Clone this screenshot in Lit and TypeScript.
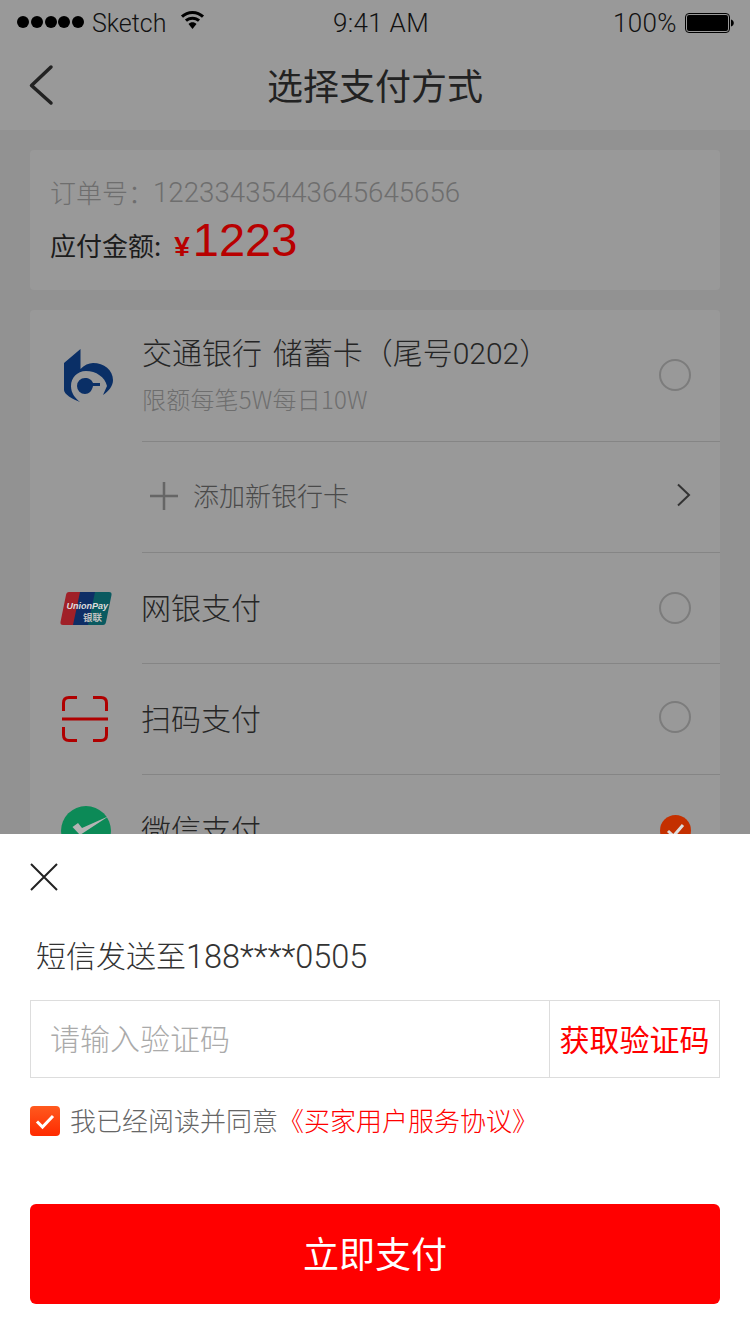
import { LitElement, html, css, svg } from "lit";
import { customElement } from "lit/decorators.js";

@customElement("app-root")
export class AppRoot extends LitElement {
  static styles = css`
    :host {
      display: block;
      position: relative;
      width: 750px;
      height: 1334px;
      overflow: hidden;
      background: #929292;
      font-family: "Noto Sans CJK SC", "Liberation Sans", sans-serif;
      font-weight: 300;
      color: #222;
    }
    .status {
      height: 40px;
      background: #999;
      display: grid;
      grid-template-columns: 1fr auto 1fr;
      align-items: center;
      padding: 6px 16px 0 17px;
      box-sizing: border-box;
      font-family: "Roboto", "Liberation Sans", sans-serif;
      font-weight: 300;
      font-size: 25px;
      color: #111;
    }
    .st-left, .st-right { display: flex; align-items: center; }
    .st-right { justify-content: flex-end; }
    .st-right span { font-size: 26px; letter-spacing: 0.4px; }
    .time { margin-left: 11px; font-size: 26px; letter-spacing: 0.3px; }
    .dots { display: flex; gap: 1.75px; margin-right: 8px; margin-top: -3px; }
    .dots i { width: 12px; height: 12px; border-radius: 50%; background: #000; display: block; }
    .wifi { margin-left: 14px; margin-top: -7px; }
    .battery { margin-left: 8px; margin-top: -1px; }
    .nav {
      height: 90px;
      background: #999;
      display: flex;
      align-items: center;
      justify-content: center;
      position: relative;
      font-size: 36px;
      font-weight: 400;
      color: #222;
      padding-bottom: 2px;
      box-sizing: border-box;
    }
    .back { position: absolute; left: 28px; top: 24px; }
    .main { padding: 20px 30px 0; display: flex; flex-direction: column; gap: 20px; }
    .order {
      height: 140px;
      background: #999;
      border-radius: 4px;
      padding: 21px 20px 0;
      box-sizing: border-box;
    }
    .order-no { display: flex; align-items: center; height: 40px; color: #6e6e6e; font-size: 26px; }
    .order-no b { font-weight: 300; font-family: "Roboto", "Liberation Sans", sans-serif; font-size: 27.7px; margin: 2px 0 0 -1px; }
    .due { display: flex; align-items: baseline; height: 58px; font-size: 26px; font-weight: 400; color: #1c1c1c; line-height: 58px; }
    .yen { color: #b80000; font-family: "Liberation Sans", sans-serif; font-weight: 700; font-size: 28px; margin-left: 13px; margin-right: 3px; }
    .amt { color: #b80000; font-family: "Liberation Sans", sans-serif; font-size: 47px; font-weight: 400; }
    .list { background: #999; border-radius: 4px; }
    .row { display: flex; height: 111px; }
    .row.first { height: 132px; }
    .slot { width: 112px; flex: none; display: flex; align-items: center; justify-content: center; }
    .body {
      flex: 1;
      display: flex;
      align-items: center;
      justify-content: space-between;
      border-bottom: 1px solid #858585;
      padding-right: 29px;
      font-size: 30px;
      color: #252525;
      box-sizing: border-box;
      min-width: 0;
    }
    .label { margin-left: -1px; margin-bottom: 4px; }
    .bank { padding-bottom: 5px; }
    .bank-title { font-size: 30px; line-height: 40px; color: #252525; word-spacing: 4px; }
    .bank-title span { font-family: "Roboto", "Liberation Sans", sans-serif; }
    .bank-sub { font-size: 24px; line-height: 34px; color: #6e6e6e; margin-top: 8px; letter-spacing: 0.2px; }
    .radio { width: 32px; height: 32px; box-sizing: border-box; border: 2px solid #7c7c7c; border-radius: 50%; flex: none; }
    .radio.up { margin-bottom: 4px; }
    .radio.up1 { margin-bottom: 2px; }
    .add { display: flex; align-items: center; gap: 15px; font-size: 26px; color: #4a4a4a; padding: 0 0 2px 8px; }
    .add span { margin-bottom: 4px; }
    .chev { margin-bottom: 4px; }
    .checked { width: 31px; height: 31px; flex: none; margin-top: 1px; }
    .bank-icon { margin-left: 4px; margin-bottom: 2px; }
    .scan-icon { margin: 0 2px 2px 0; }
    .sheet {
      position: absolute;
      left: 0;
      right: 0;
      bottom: 0;
      height: 500px;
      background: #fff;
      padding: 0 30px;
      box-sizing: border-box;
      display: flex;
      flex-direction: column;
      align-items: stretch;
    }
    .close { margin-top: 29px; display: block; flex: none; }
    .sms { margin-top: 43px; padding-left: 6px; height: 44px; font-size: 30px; color: #333; display: flex; align-items: center; flex: none; }
    .sms span { margin-bottom: 4px; }
    .sms b { font-weight: 300; font-family: "Roboto", "Liberation Sans", sans-serif; font-size: 32.5px; margin-top: 2px; }
    .code {
      margin-top: 22px;
      height: 78px;
      border: 1px solid #ddd;
      box-sizing: border-box;
      display: flex;
      align-items: center;
      flex: none;
    }
    .ph { flex: 1; padding: 0 0 4px 19px; font-size: 30px; color: #aaa; }
    .get {
      width: 170px;
      height: 100%;
      border-left: 1px solid #ddd;
      box-sizing: border-box;
      display: flex;
      align-items: center;
      justify-content: center;
      color: #f00;
      font-size: 30px;
      font-weight: 400;
      padding-bottom: 3px;
    }
    .agree { margin-top: 28px; display: flex; align-items: center; gap: 10px; font-size: 26px; color: #666; height: 30px; flex: none; }
    .agree span { margin-bottom: 4px; flex: none; }
    .agree em { font-style: normal; color: #f00; margin: 0 0 4px -10px; flex: none; }
    .cb { flex: none; display: block; }
    .pay {
      margin-top: 68px;
      height: 100px;
      background: #f00;
      border-radius: 6px;
      color: #fff;
      font-size: 36px;
      font-weight: 400;
      padding-bottom: 4px;
      box-sizing: border-box;
      display: flex;
      align-items: center;
      justify-content: center;
      flex: none;
    }
  `;

  render() {
    return html`
      <div class="status">
        <div class="st-left">
          <span class="dots"><i></i><i></i><i></i><i></i><i></i></span>
          <span>Sketch</span>
          <svg class="wifi" width="25" height="18" viewBox="0 0 25 19">
            <path d="M12.5 0C7.8 0 3.5 1.8.3 4.8l2.2 2.3C5.1 4.7 8.6 3.2 12.5 3.2s7.4 1.5 10 3.9l2.2-2.3C21.5 1.8 17.2 0 12.5 0z" />
            <path d="M12.5 6C9.4 6 6.6 7.2 4.5 9.1l2.2 2.3c1.5-1.4 3.5-2.2 5.8-2.2s4.3.8 5.8 2.2l2.2-2.3C18.4 7.2 15.6 6 12.5 6z" />
            <path d="M12.5 12c-1.600 0-3.100.6-4.200 1.600L12.500 19l4.200-5.400c-1.100-1-2.600-1.600-4.200-1.600z" />
          </svg>
        </div>
        <div class="time">9:41 AM</div>
        <div class="st-right">
          <span>100%</span>
          <svg class="battery" width="49" height="20" viewBox="0 0 49 20">
            <rect x="0.5" y="0.5" width="44" height="19" rx="3.5" fill="none" stroke="#000" />
            <rect x="2" y="2" width="41" height="16" rx="2" fill="#000" />
            <path d="M46 6.5c1.6.3 2.8 1.7 2.8 3.5s-1.2 3.2-2.8 3.5z" fill="#000" />
          </svg>
        </div>
      </div>
      <div class="nav">
        <svg class="back" width="26" height="42" viewBox="0 0 26 42">
          <path d="M23 3 L3.5 21.5 L23 39" fill="none" stroke="#222" stroke-width="3.5" stroke-linecap="round" stroke-linejoin="round" />
        </svg>
        选择支付方式
      </div>
      <div class="main">
        <div class="order">
          <div class="order-no">订单号：<b>12233435443645645656</b></div>
          <div class="due">应付金额:<span class="yen">¥</span><span class="amt">1223</span></div>
        </div>
        <div class="list">
          <div class="row first">
            <div class="slot">${this.bankIcon()}</div>
            <div class="body">
              <div class="bank">
                <div class="bank-title">交通银行 储蓄卡（尾号<span>0202</span>）</div>
                <div class="bank-sub">限额每笔5W每日10W</div>
              </div>
              <span class="radio up1"></span>
            </div>
          </div>
          <div class="row">
            <div class="slot"></div>
            <div class="body">
              <div class="add">
                <svg width="28" height="28" viewBox="0 0 28 28"><path d="M14 0V28M0 14H28" stroke="#666" stroke-width="2.5" /></svg>
                <span>添加新银行卡</span>
              </div>
              <svg class="chev" width="15" height="24" viewBox="0 0 15 24"><path d="M2 1.5 L13 12 L2 22.5" fill="none" stroke="#333" stroke-width="2" /></svg>
            </div>
          </div>
          <div class="row">
            <div class="slot">${this.unionIcon()}</div>
            <div class="body"><span class="label">网银支付</span><span class="radio"></span></div>
          </div>
          <div class="row">
            <div class="slot">${this.scanIcon()}</div>
            <div class="body"><span class="label">扫码支付</span><span class="radio up"></span></div>
          </div>
          <div class="row">
            <div class="slot">
              <svg width="50" height="50" viewBox="0 0 50 50">
                <circle cx="25" cy="25" r="25" fill="#0c8a57" />
                <path d="M11.5 21 L17 17 L21 22 L48 10 L19 29 Z" fill="#b4b4b4" />
              </svg>
            </div>
            <div class="body"><span class="label">微信支付</span>
              <svg class="checked" viewBox="0 0 31 31">
                <circle cx="15.5" cy="15.5" r="15.5" fill="#c43000" />
                <path d="M8 16 L13.5 21 L23 10" fill="none" stroke="#ddd" stroke-width="3" />
              </svg>
            </div>
          </div>
        </div>
      </div>
      <div class="sheet">
        <svg class="close" width="28" height="28" viewBox="0 0 28 28">
          <path d="M1 1 L27 27 M27 1 L1 27" stroke="#222" stroke-width="2" />
        </svg>
        <div class="sms"><span>短信发送至</span><b>188****0505</b></div>
        <div class="code">
          <div class="ph">请输入验证码</div>
          <div class="get">获取验证码</div>
        </div>
        <div class="agree">
          <svg class="cb" width="30" height="30" viewBox="0 0 30 30">
            <defs><linearGradient id="cbg" x1="0" y1="0" x2="0" y2="1"><stop offset="0" stop-color="#ff5a1e" /><stop offset="1" stop-color="#ff2a00" /></linearGradient></defs>
            <rect width="30" height="30" rx="4" fill="url(#cbg)" />
            <path d="M7 15.5 L12.5 21 L23 10" fill="none" stroke="#fff" stroke-width="3" />
          </svg>
          <span>我已经阅读并同意</span><em>《买家用户服务协议》</em>
        </div>
        <div class="pay">立即支付</div>
      </div>
    `;
  }

  bankIcon() {
    return html`<svg class="bank-icon" width="49" height="53" viewBox="0 0 49 53">
      ${svg`
      <path fill="#0a2f66" d="M0 14 L16.5 0 V20 C20 16 25 14 29 14 C40 14 49 21 49 31 C49 37 45 42 39 46 L43 37 C41 28 32 22 22 22 C13 22 7 29 7 37 C7 44 11 49 16 53 C8 50 0 45 0 41 Z" />
      <path fill="#0a2f66" d="M21 29 C25 29 28 31 29 34 H36 V37 H29 C28 42 25 45 21 45 A8 8 0 0 1 21 29 Z" />
      `}
    </svg>`;
  }

  unionIcon() {
    return html`<svg width="52" height="33" viewBox="0 0 52 33">
      ${svg`
      <path fill="#a02028" d="M9 0 H22 L15 33 H3 Q0 33 .5 30 L6 3 Q6.5 0 9 0 Z" />
      <path fill="#0e2e66" d="M20 0 H37 L30 33 H13 Z" />
      <path fill="#0a5a60" d="M35 0 H49 Q52 0 51.5 3 L46 30 Q45.5 33 43 33 H28 Z" />
      <text x="6.5" y="17" font-family="Liberation Sans" font-size="9" font-weight="700" font-style="italic" fill="#ddd">UnionPay</text>
      <text x="23" y="29" font-family="Noto Sans CJK SC" font-size="9.5" font-weight="700" fill="#c0c0c0">银联</text>
      `}
    </svg>`;
  }

  scanIcon() {
    return html`<svg class="scan-icon" width="46" height="46" viewBox="0 0 46 46">
      <path d="M15 1.5 H7 Q1.5 1.5 1.5 7 V15 M31 1.5 H39 Q44.5 1.5 44.5 7 V15 M1.5 31 V39 Q1.5 44.5 7 44.5 H15 M44.5 31 V39 Q44.5 44.5 39 44.5 H31" fill="none" stroke="#b00000" stroke-width="3" />
      <path d="M0 23 H46" stroke="#b00000" stroke-width="3" />
    </svg>`;
  }
}
